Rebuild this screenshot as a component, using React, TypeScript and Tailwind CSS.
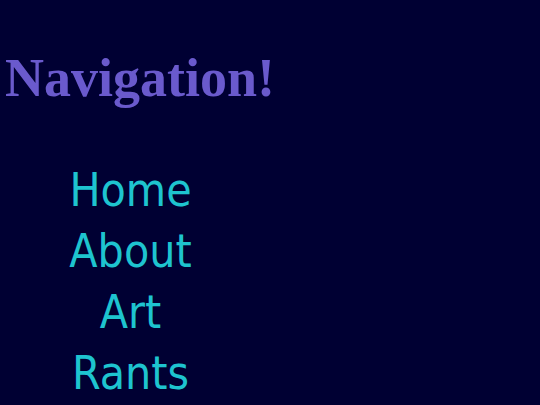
export default function App() {
  const links = ['Home', 'About', 'Art', 'Rants']
  return (
    <div className="w-[540px] h-[405px] overflow-hidden bg-[#000033]">
      <h1 className="pt-[46px] pl-[5px] text-[54px] leading-[64px] font-bold text-[#6a5acd] font-['Liberation_Serif',serif]">
        Navigation!
      </h1>
      <ul className="mt-[50px] w-[261px] flex flex-col items-center font-['DejaVu_Sans_Condensed','DejaVu_Sans',sans-serif] text-[46px] leading-[61px] text-[#1ec4cf]">
        {links.map(l => (
          <li key={l}>
            <a href="#">{l}</a>
          </li>
        ))}
      </ul>
    </div>
  )
}
